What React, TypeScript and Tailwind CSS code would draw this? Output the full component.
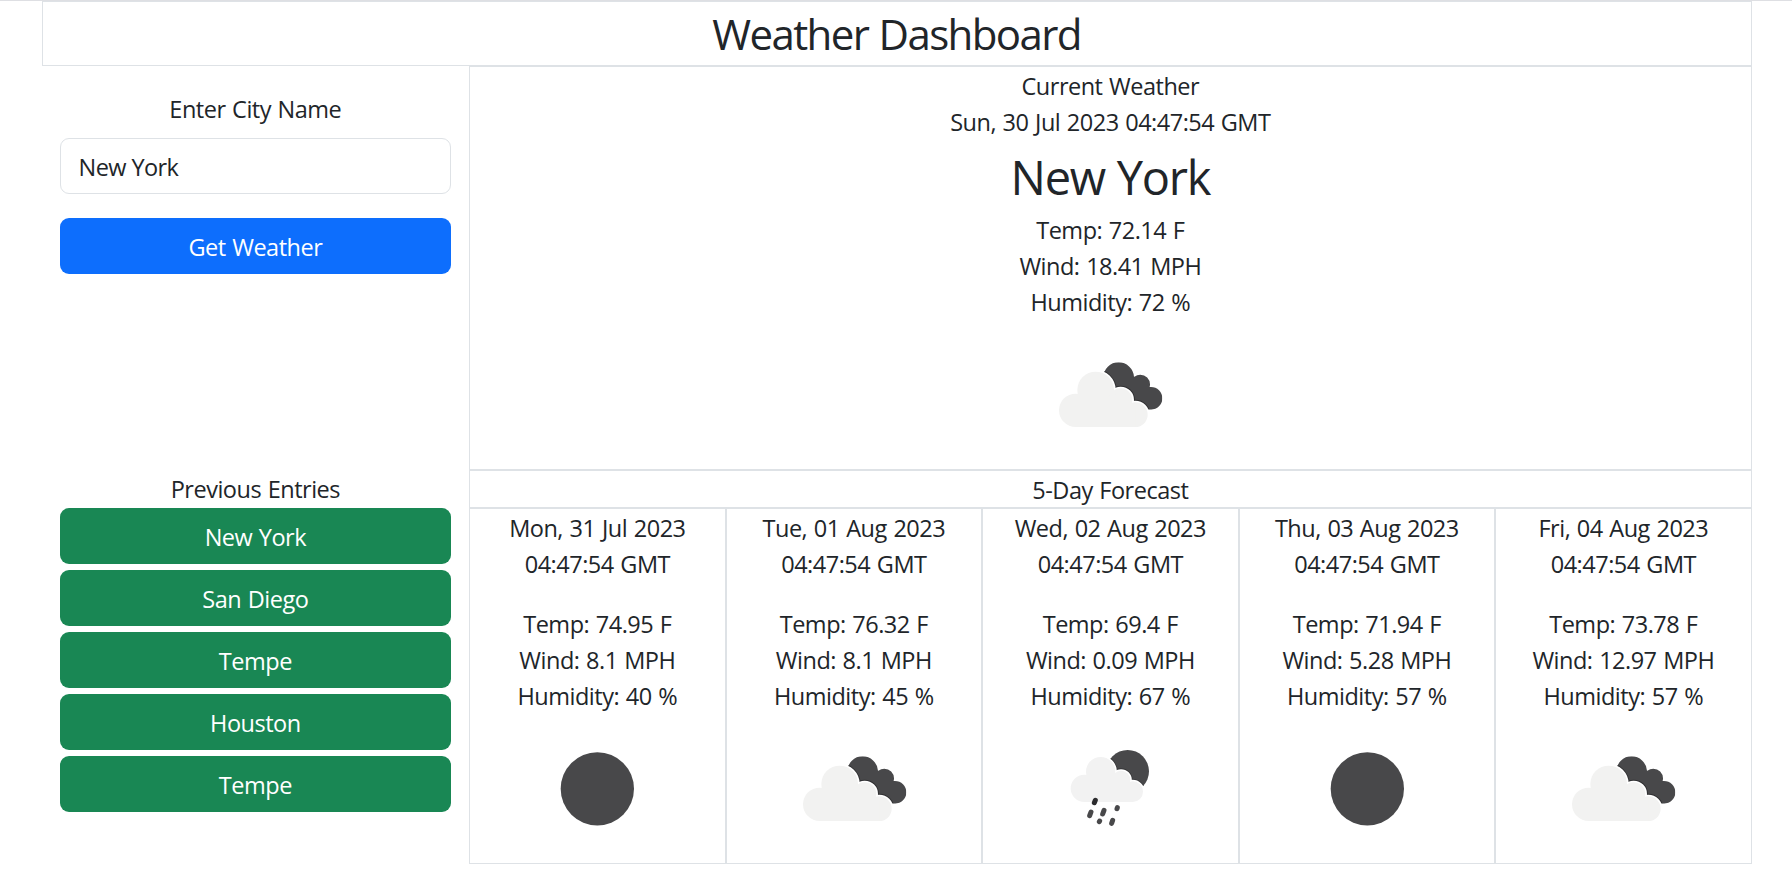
import { useId, type ReactNode } from "react";

type IconKind = "moon" | "clouds" | "rain";

interface Day {
  date: string;
  temp: string;
  wind: string;
  humidity: string;
  icon: IconKind;
}

const days: Day[] = [
  { date: "Mon, 31 Jul 2023", temp: "74.95", wind: "8.1", humidity: "40", icon: "moon" },
  { date: "Tue, 01 Aug 2023", temp: "76.32", wind: "8.1", humidity: "45", icon: "clouds" },
  { date: "Wed, 02 Aug 2023", temp: "69.4", wind: "0.09", humidity: "67", icon: "rain" },
  { date: "Thu, 03 Aug 2023", temp: "71.94", wind: "5.28", humidity: "57", icon: "moon" },
  { date: "Fri, 04 Aug 2023", temp: "73.78", wind: "12.97", humidity: "57", icon: "clouds" },
];

const history = ["New York", "San Diego", "Tempe", "Houston", "Tempe"];

function CloudShapes() {
  return (
    <>
      <circle cx="138" cy="211" r="50" />
      <circle cx="198" cy="150" r="55" />
      <circle cx="273" cy="180" r="35" />
      <circle cx="317" cy="224" r="37" />
      <path d="M138 261V180H198L273 160L317 200V261Z" />
    </>
  );
}

function RainCloudShapes() {
  return (
    <>
      <circle cx="104" cy="175" r="41" />
      <circle cx="153" cy="125" r="44" />
      <circle cx="214" cy="150" r="28" />
      <circle cx="249" cy="185" r="31" />
      <path d="M104 216V150H153L214 135L249 165V216Z" />
    </>
  );
}

function WeatherIcon({ kind }: { kind: IconKind }) {
  const id = useId();
  if (kind === "moon") {
    return (
      <svg className="mx-auto block size-[150px]" viewBox="0 0 450 450">
        <circle cx="226" cy="227.5" r="110" fill="#48484a" />
      </svg>
    );
  }
  if (kind === "rain") {
    return (
      <svg className="mx-auto block size-[150px]" viewBox="-44 -51 450 450">
        <clipPath id={id}>
          <circle cx="234" cy="124" r="64" />
        </clipPath>
        <g clipPath={`url(#${id})`}>
          <rect x="150" y="40" width="180" height="180" fill="#48484a" />
          <g fill="#363638" stroke="#363638" strokeWidth="14">
            <RainCloudShapes />
          </g>
        </g>
        <g fill="#fff" stroke="#fff" strokeWidth="9">
          <RainCloudShapes />
        </g>
        <g fill="#f2f2f2">
          <RainCloudShapes />
        </g>
        <g stroke="#48484a" strokeWidth="15" strokeLinecap="round">
          <path d="M137 211L134 218" stroke="#2c2c2e" />
          <path d="M124 246L120 257" />
          <path d="M163 241L159 252" />
          <path d="M203 233L202 236" />
          <path d="M150 273L149 275" />
          <path d="M189 271L186 280" />
        </g>
      </svg>
    );
  }
  return (
    <svg className="mx-auto block size-[150px]" viewBox="16 -63 450 450">
      <clipPath id={id}>
        <circle cx="267" cy="113" r="46" />
        <circle cx="332" cy="133" r="29" />
        <circle cx="364" cy="175" r="34" />
        <path d="M235 110L300 100L335 125L364 165L350 208L290 200Z" />
      </clipPath>
      <g clipPath={`url(#${id})`}>
        <rect x="200" y="50" width="220" height="180" fill="#48484a" />
        <g fill="#303032" stroke="#303032" strokeWidth="16">
          <CloudShapes />
        </g>
      </g>
      <g fill="#fff" stroke="#fff" strokeWidth="10">
        <CloudShapes />
      </g>
      <g fill="#f2f2f1">
        <CloudShapes />
      </g>
    </svg>
  );
}

function Line({ children }: { children: ReactNode }) {
  return <p className="h-9 whitespace-nowrap pt-px">{children}</p>;
}

function Readings({ temp, wind, humidity }: { temp: string; wind: string; humidity: string }) {
  return (
    <>
      <Line>Temp: {temp} F</Line>
      <Line>Wind: {wind} MPH</Line>
      <Line>Humidity: {humidity} %</Line>
    </>
  );
}

export default function App() {
  return (
    <div className="h-[892px] overflow-hidden border-t border-[#dedfe3] bg-white font-['Open_Sans','Noto_Sans',sans-serif] text-[23.5px] leading-9 font-[370] tracking-[-0.5px] text-[#212529] [word-spacing:1px]">
      <div className="ml-[41.6px] w-[1710px] text-center">
        <header className="h-[65px] border border-[#dee2e6]">
          <h1 className="pt-[7px] text-[42px] leading-[50px] font-[370] tracking-[-1.6px]">Weather Dashboard</h1>
        </header>
        <div className="flex">
          <aside className="w-[427.5px] shrink-0 px-[18px]">
            <form className="h-[404px] pt-6" onSubmit={(e) => e.preventDefault()}>
              <label htmlFor="city" className="mb-3 block h-9 pt-px">
                Enter City Name
              </label>
              <input
                id="city"
                defaultValue="New York"
                className="block h-14 w-full rounded-[9px] border border-[#dee2e6] px-[18px] pt-0.5 tracking-[-0.6px] outline-none"
              />
              <button className="mt-6 block h-14 w-full rounded-[9px] bg-[#0d6efd] pt-0.5 tracking-[-0.5px] text-white [word-spacing:1px]">
                Get Weather
              </button>
            </form>
            <h2 className="mb-0.5 h-9 pt-px">Previous Entries</h2>
            <div className="flex flex-col gap-1.5">
              {history.map((city, i) => (
                <button
                  key={i}
                  className="h-14 w-full rounded-[9px] bg-[#198754] pt-0.5 tracking-[-0.5px] text-white [word-spacing:1px]"
                >
                  {city}
                </button>
              ))}
            </div>
          </aside>
          <main className="min-w-0 flex-1">
            <section className="h-[404px] border border-[#dee2e6]">
              <Line>Current Weather</Line>
              <Line>Sun, 30 Jul 2023 04:47:54 GMT</Line>
              <h2 className="h-[72px] pt-2 text-[47px] leading-[60px] tracking-[-1.3px]">New York</h2>
              <Readings temp="72.14" wind="18.41" humidity="72" />
              <WeatherIcon kind="clouds" />
            </section>
            <h2 className="h-[38px] border border-[#dee2e6] pt-px">5-Day Forecast</h2>
            <section className="grid grid-cols-5">
              {days.map((day) => (
                <article key={day.date} className="h-[356px] border border-[#dee2e6]">
                  <Line>{day.date}</Line>
                  <Line>04:47:54 GMT</Line>
                  <div className="mt-6">
                    <Readings temp={day.temp} wind={day.wind} humidity={day.humidity} />
                  </div>
                  <WeatherIcon kind={day.icon} />
                </article>
              ))}
            </section>
          </main>
        </div>
      </div>
    </div>
  );
}
